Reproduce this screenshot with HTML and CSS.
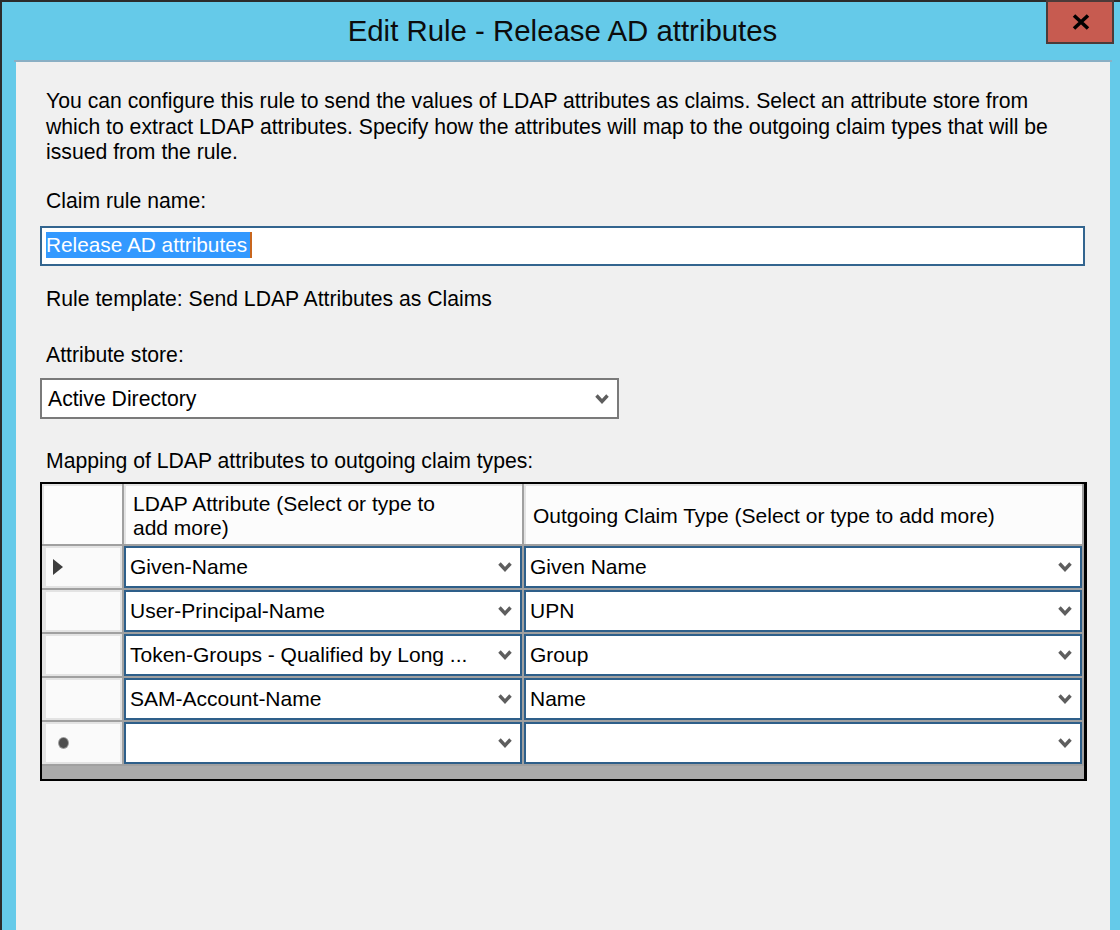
FILE: index.html
```html
<!DOCTYPE html>
<html lang="en">
<head>
<meta charset="utf-8">
<title>Edit Rule - Release AD attributes</title>
<link rel="stylesheet" href="styles.css">
</head>
<body>
<div class="window">
  <div class="titlebar">
    <span class="title">Edit Rule - Release AD attributes</span>
    <div class="close" aria-label="Close">
      <svg width="18" height="16" viewBox="0 0 18 16"><path d="M2 1.5 L16 14.5 M16 1.5 L2 14.5" stroke="#000" stroke-width="3.6" fill="none"/></svg>
    </div>
  </div>
  <div class="frame">
    <div class="client">
      <p class="text intro">You can configure this rule to send the values of LDAP attributes as claims. Select an attribute store from which to extract LDAP attributes. Specify how the attributes will map to the outgoing claim types that will be issued from the rule.</p>
      <p class="text lbl-name">Claim rule name:</p>
      <div class="textbox"><span class="sel">Release AD attributes</span></div>
      <p class="text template">Rule template: Send LDAP Attributes as Claims</p>
      <p class="text store-lbl">Attribute store:</p>
      <div class="combo"><span>Active Directory</span><svg class="chev" width="14" height="12" viewBox="0 0 14 12"><polyline points="1.5,2.5 7,8.5 12.5,2.5" fill="none" stroke="#5e5e5e" stroke-width="3.4"/></svg></div>
      <p class="text map-lbl">Mapping of LDAP attributes to outgoing claim types:</p>
      <div class="grid">
        <div class="table">
          <div class="hcell corner"></div>
          <div class="hcell ldap">LDAP Attribute (Select or type to add more)</div>
          <div class="hcell">Outgoing Claim Type (Select or type to add more)</div>

          <div class="rh"><svg class="arrow" width="10" height="16" viewBox="0 0 10 16"><polygon points="0,0 10,8 0,16" fill="#3c3c3c"/></svg></div>
          <div class="cell"><span>Given-Name</span><svg class="chev" width="14" height="12" viewBox="0 0 14 12"><polyline points="1.5,2.5 7,8.5 12.5,2.5" fill="none" stroke="#5e5e5e" stroke-width="3.4"/></svg></div>
          <div class="cell"><span>Given Name</span><svg class="chev" width="14" height="12" viewBox="0 0 14 12"><polyline points="1.5,2.5 7,8.5 12.5,2.5" fill="none" stroke="#5e5e5e" stroke-width="3.4"/></svg></div>

          <div class="rh"></div>
          <div class="cell"><span>User-Principal-Name</span><svg class="chev" width="14" height="12" viewBox="0 0 14 12"><polyline points="1.5,2.5 7,8.5 12.5,2.5" fill="none" stroke="#5e5e5e" stroke-width="3.4"/></svg></div>
          <div class="cell"><span>UPN</span><svg class="chev" width="14" height="12" viewBox="0 0 14 12"><polyline points="1.5,2.5 7,8.5 12.5,2.5" fill="none" stroke="#5e5e5e" stroke-width="3.4"/></svg></div>

          <div class="rh"></div>
          <div class="cell"><span>Token-Groups - Qualified by Long ...</span><svg class="chev" width="14" height="12" viewBox="0 0 14 12"><polyline points="1.5,2.5 7,8.5 12.5,2.5" fill="none" stroke="#5e5e5e" stroke-width="3.4"/></svg></div>
          <div class="cell"><span>Group</span><svg class="chev" width="14" height="12" viewBox="0 0 14 12"><polyline points="1.5,2.5 7,8.5 12.5,2.5" fill="none" stroke="#5e5e5e" stroke-width="3.4"/></svg></div>

          <div class="rh"></div>
          <div class="cell"><span>SAM-Account-Name</span><svg class="chev" width="14" height="12" viewBox="0 0 14 12"><polyline points="1.5,2.5 7,8.5 12.5,2.5" fill="none" stroke="#5e5e5e" stroke-width="3.4"/></svg></div>
          <div class="cell"><span>Name</span><svg class="chev" width="14" height="12" viewBox="0 0 14 12"><polyline points="1.5,2.5 7,8.5 12.5,2.5" fill="none" stroke="#5e5e5e" stroke-width="3.4"/></svg></div>

          <div class="rh"><span class="newrow"></span></div>
          <div class="cell"><span></span><svg class="chev" width="14" height="12" viewBox="0 0 14 12"><polyline points="1.5,2.5 7,8.5 12.5,2.5" fill="none" stroke="#5e5e5e" stroke-width="3.4"/></svg></div>
          <div class="cell"><span></span><svg class="chev" width="14" height="12" viewBox="0 0 14 12"><polyline points="1.5,2.5 7,8.5 12.5,2.5" fill="none" stroke="#5e5e5e" stroke-width="3.4"/></svg></div>
        </div>
      </div>
    </div>
  </div>
</div>
</body>
</html>
```

FILE: styles.css
```css
* { box-sizing: border-box; }
html, body { margin: 0; padding: 0; }
body {
  width: 1120px;
  height: 930px;
  overflow: hidden;
  background: #65CAE9;
  font-family: "Liberation Sans", Arial, sans-serif;
  color: #000;
}
.window {
  position: relative;
  height: 930px;
  background: #65CAE9;
  border-top: 2px solid #2b2b2b;
  border-left: 2px solid #2b2b2b;
  display: flex;
  flex-direction: column;
}
.titlebar {
  height: 58px;
  flex: none;
  display: flex;
  justify-content: center;
  align-items: center;
  padding-left: 3px;
}
.title {
  font-size: 29.4px;
  line-height: 58px;
  color: #0c0c0c;
  white-space: nowrap;
}
.close {
  position: absolute;
  top: -2px;
  right: 6px;
  width: 68px;
  height: 44px;
  border: 2px solid #4b3a39;
  background: #C75B50;
  display: flex;
  align-items: center;
  justify-content: center;
  padding-left: 2px;
}
.close svg { display: block; }
.frame {
  flex: 1;
  margin: 0 8px 0 12px;
  border-top: 2px solid #8AAFC4;
  display: flex;
}
.client {
  flex: 1;
  margin: 0 2px;
  background: #F0F0F0;
  padding: 26px 23px 0 24px;
}
.text {
  margin: 0;
  padding-left: 6px;
  font-size: 21.2px;
  line-height: 25.6px;
}
.intro { margin-right: 30px; }
.lbl-name { margin-top: 23.2px; }
.textbox {
  margin-top: 12.4px;
  margin-right: 2px;
  height: 40px;
  border: 2px solid #33658F;
  background: #fff;
  padding: 4px 4px;
}
.sel {
  display: inline-block;
  vertical-align: top;
  height: 26px;
  line-height: 26px;
  font-size: 20.8px;
  background: #3399FF;
  color: #fff;
  padding-right: 3px;
  border-right: 2px solid #C8661E;
}
.template { margin-top: 20px; }
.store-lbl { margin-top: 30.4px; }
.combo {
  margin-top: 10.4px;
  width: 579px;
  height: 41px;
  border: 2px solid #7A7A7A;
  background: #fff;
  display: flex;
  align-items: center;
  justify-content: space-between;
  padding: 1px 8px 0 6px;
  font-size: 21.2px;
  line-height: 26px;
}
.chev { display: block; flex: none; }
.map-lbl { margin-top: 29px; }
.grid {
  margin-top: 8.4px;
  height: 299px;
  border: 2px solid #000;
  border-right-width: 3px;
  background: #ABABAB;
}
.table {
  display: grid;
  grid-template-columns: 80px 398px 1fr;
  grid-template-rows: 60px repeat(5, 42px);
  gap: 2px;
  padding: 0 2px 2px 0;
  background: #A0A0A0;
}
.hcell {
  background: #FCFCFC;
  border-top: 2px solid #E3E3E3;
  border-left: 2px solid #E3E3E3;
  display: flex;
  align-items: center;
  padding: 2px 8px 0 7px;
  font-size: 21px;
  line-height: 24px;
}
.hcell.ldap { padding-right: 60px; }
.rh {
  background: #FAFAFA;
  border: 2px solid #E3E3E3;
  border-left-width: 4px;
  display: flex;
  align-items: center;
}
.arrow { display: block; margin-left: 7px; }
.newrow {
  display: block;
  width: 9px;
  height: 10px;
  margin-left: 13px;
  border-radius: 50%;
  background: #4e4e4e;
  box-shadow: 0 0 0 1px #9a9a9a;
}
.cell {
  background: #fff;
  border: 2px solid #2E5F8A;
  display: flex;
  align-items: center;
  justify-content: space-between;
  padding: 0 8px 0 4px;
  font-size: 21px;
  line-height: 26px;
  white-space: nowrap;
}
```
